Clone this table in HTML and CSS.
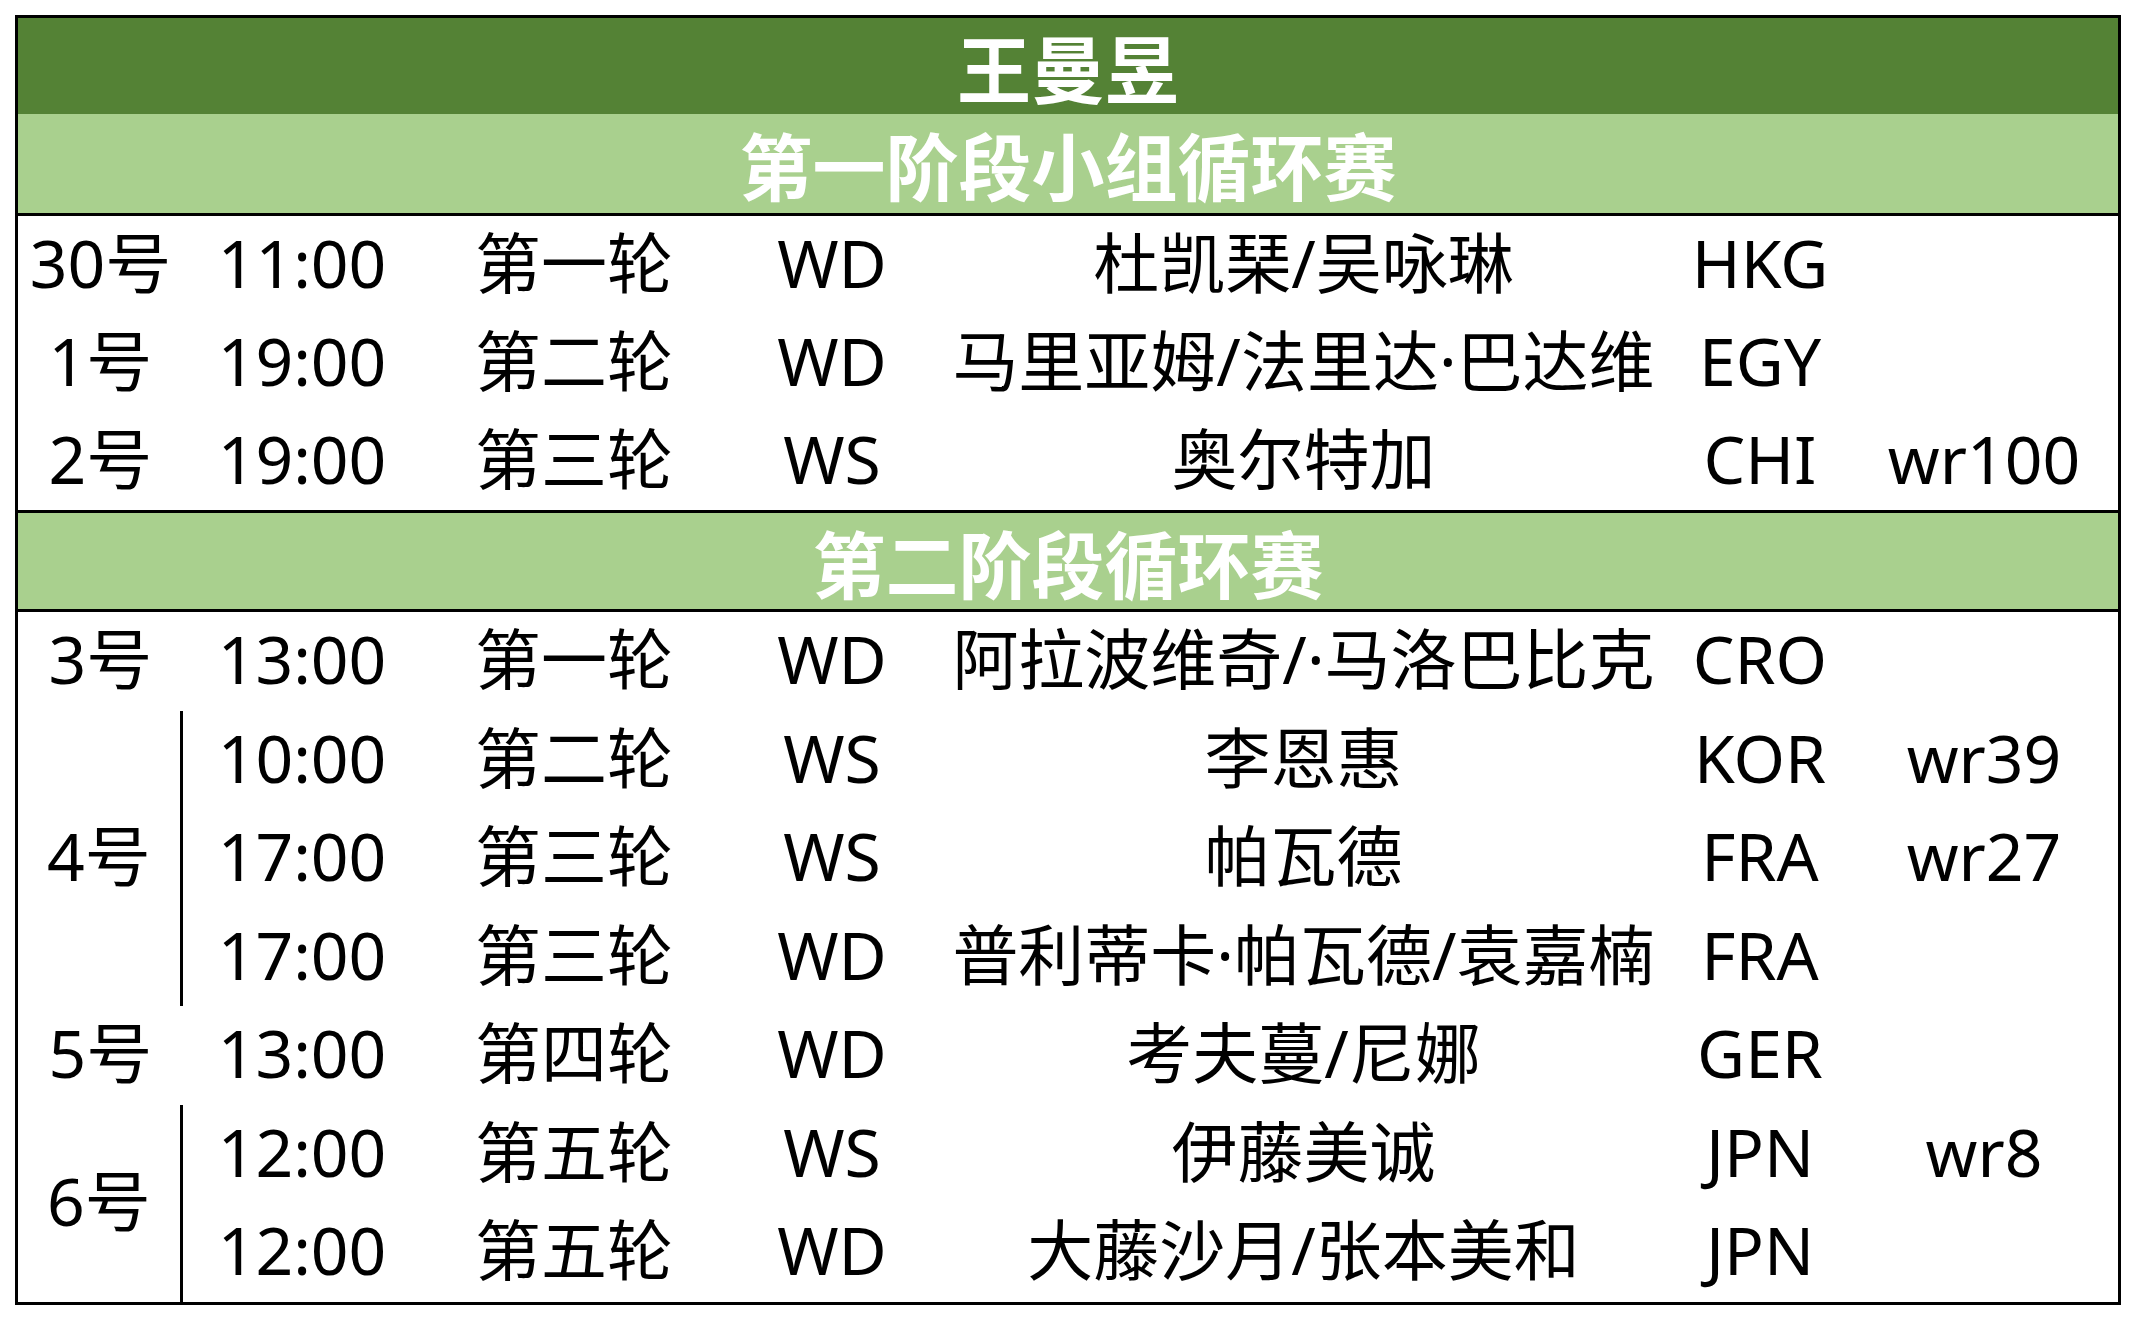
FILE: index.html
```html
<!DOCTYPE html>
<html lang="zh-CN">
<head>
<meta charset="utf-8">
<title>王曼昱</title>
<link rel="stylesheet" href="styles.css">
</head>
<body>
<div class="sheet">
  <div class="title">王曼昱</div>
  <div class="stage stage1">第一阶段小组循环赛</div>
  <div class="grid g1">
    <div class="cell">30号</div><div class="cell">11:00</div><div class="cell">第一轮</div><div class="cell">WD</div><div class="cell">杜凯琹/吴咏琳</div><div class="cell">HKG</div><div class="cell"></div>
    <div class="cell">1号</div><div class="cell">19:00</div><div class="cell">第二轮</div><div class="cell">WD</div><div class="cell">马里亚姆/法里达·巴达维</div><div class="cell">EGY</div><div class="cell"></div>
    <div class="cell">2号</div><div class="cell">19:00</div><div class="cell">第三轮</div><div class="cell">WS</div><div class="cell">奥尔特加</div><div class="cell">CHI</div><div class="cell">wr100</div>
  </div>
  <div class="stage stage2">第二阶段循环赛</div>
  <div class="grid g2">
    <div class="cell">3号</div><div class="cell">13:00</div><div class="cell">第一轮</div><div class="cell">WD</div><div class="cell">阿拉波维奇/·马洛巴比克</div><div class="cell">CRO</div><div class="cell"></div>
    <div class="cell merged span3">4号</div><div class="cell">10:00</div><div class="cell">第二轮</div><div class="cell">WS</div><div class="cell">李恩惠</div><div class="cell">KOR</div><div class="cell">wr39</div>
    <div class="cell">17:00</div><div class="cell">第三轮</div><div class="cell">WS</div><div class="cell">帕瓦德</div><div class="cell">FRA</div><div class="cell">wr27</div>
    <div class="cell">17:00</div><div class="cell">第三轮</div><div class="cell">WD</div><div class="cell">普利蒂卡·帕瓦德/袁嘉楠</div><div class="cell">FRA</div><div class="cell"></div>
    <div class="cell">5号</div><div class="cell">13:00</div><div class="cell">第四轮</div><div class="cell">WD</div><div class="cell">考夫蔓/尼娜</div><div class="cell">GER</div><div class="cell"></div>
    <div class="cell merged span2">6号</div><div class="cell">12:00</div><div class="cell">第五轮</div><div class="cell">WS</div><div class="cell">伊藤美诚</div><div class="cell">JPN</div><div class="cell">wr8</div>
    <div class="cell">12:00</div><div class="cell">第五轮</div><div class="cell">WD</div><div class="cell">大藤沙月/张本美和</div><div class="cell">JPN</div><div class="cell"></div>
  </div>
</div>
</body>
</html>
```
FILE: styles.css
```css
html, body {
  margin: 0;
  padding: 0;
  background: #ffffff;
}

body {
  font-family: "Noto Sans", "Noto Sans CJK SC", sans-serif;
  color: #000000;
}

.sheet {
  margin: 15px 0 0 15px;
  width: 2100px;
  border: 3px solid #000000;
  background: #ffffff;
}

.title {
  height: 96px;
  background: #548235;
  color: #ffffff;
  font-family: "Noto Sans CJK SC", sans-serif;
  font-weight: 700;
  font-size: 74px;
  line-height: 1;
  display: flex;
  align-items: center;
  justify-content: center;
}

.stage {
  background: #a9d08e;
  color: #ffffff;
  font-family: "Noto Sans CJK SC", sans-serif;
  font-weight: 700;
  font-size: 73px;
  line-height: 1;
  display: flex;
  align-items: center;
  justify-content: center;
}

.stage1 {
  height: 99px;
  border-bottom: 3px solid #000000;
}

.stage2 {
  height: 96px;
  border-top: 3px solid #000000;
  border-bottom: 3px solid #000000;
}

.grid {
  display: grid;
  grid-template-columns: 165px 238px 306px 210px 733px 180px 268px;
}

.g1 {
  grid-auto-rows: 98px;
}

.g2 {
  grid-auto-rows: 98.5px;
}

.cell {
  display: flex;
  align-items: center;
  justify-content: center;
  font-size: 66px;
  line-height: 1;
  padding-bottom: 6px;
  white-space: nowrap;
  box-sizing: border-box;
}

.merged {
  border-right: 3px solid #000000;
}

.span3 {
  grid-row: span 3;
}

.span2 {
  grid-row: span 2;
}
```
